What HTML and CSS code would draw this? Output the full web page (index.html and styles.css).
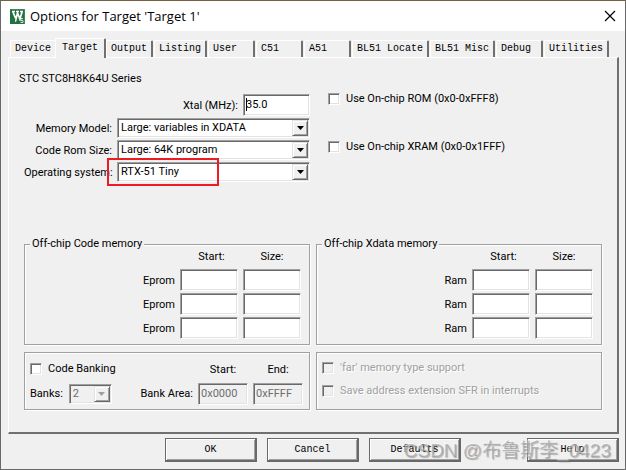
FILE: index.html
```html
<!DOCTYPE html>
<html lang="en">
<head>
<meta charset="utf-8">
<title>Options for Target 'Target 1'</title>
<link rel="stylesheet" href="styles.css">
</head>
<body>
<div class="window">
  <header class="titlebar">
    <svg class="app-icon" width="15" height="15" viewBox="0 0 15 15" aria-hidden="true">
      <rect width="15" height="15" fill="#237040"/>
      <path d="M0 0H15V15" fill="none" stroke="#5c9b72" stroke-width="1"/>
      <path d="M2 2.500H5M6 2.500H9M10 2.500H13M3 3L6 10L7.500 4L10 10L12 3" fill="none" stroke="#fff" stroke-width="1.700"/>
      <path d="M5.500 9V13M9 9L10 12M13 9.500H11V11.500H13V13.500H10.500" fill="none" stroke="#cfe5d6" stroke-width="1"/>
    </svg>
    <h1 class="title">Options for Target 'Target 1'</h1>
    <button class="close" type="button" aria-label="Close">
      <svg width="12" height="12" viewBox="0 0 12 12" aria-hidden="true"><path d="M1 1L11 11M11 1L1 11" stroke="#000" stroke-width="1.200" fill="none"/></svg>
    </button>
  </header>

  <main class="body">
    <nav class="tabs" role="tablist">
      <button class="tab" type="button" role="tab">Device</button>
      <button class="tab selected" type="button" role="tab" aria-selected="true">Target</button>
      <button class="tab" type="button" role="tab">Output</button>
      <button class="tab" type="button" role="tab">Listing</button>
      <button class="tab short" type="button" role="tab">User</button>
      <button class="tab short" type="button" role="tab">C51</button>
      <button class="tab short" type="button" role="tab">A51</button>
      <button class="tab" type="button" role="tab">BL51 Locate</button>
      <button class="tab" type="button" role="tab">BL51 Misc</button>
      <button class="tab short" type="button" role="tab">Debug</button>
      <button class="tab" type="button" role="tab">Utilities</button>
    </nav>

    <section class="pane" role="tabpanel">
      <p class="series">STC STC8H8K64U Series</p>

      <div class="columns settings">
        <div class="form">
          <label class="xtal-label" for="xtal">Xtal (MHz):</label>
          <div class="xtal"><input class="field" id="xtal" type="text" value="35.0"><span class="caret"></span></div>

          <label for="memory">Memory Model:</label>
          <div class="combo wide">
            <select id="memory"><option>Large: variables in XDATA</option></select>
            <span class="drop"><svg width="7" height="4" viewBox="0 0 7 4"><path d="M0 0H7L3.500 4Z"/></svg></span>
          </div>

          <label for="rom">Code Rom Size:</label>
          <div class="combo wide">
            <select id="rom"><option>Large: 64K program</option></select>
            <span class="drop"><svg width="7" height="4" viewBox="0 0 7 4"><path d="M0 0H7L3.500 4Z"/></svg></span>
          </div>

          <label for="os">Operating system:</label>
          <div class="combo wide">
            <select id="os"><option>RTX-51 Tiny</option></select>
            <span class="drop"><svg width="7" height="4" viewBox="0 0 7 4"><path d="M0 0H7L3.500 4Z"/></svg></span>
            <span class="highlight"></span>
          </div>
        </div>
        <div class="onchip">
          <label class="check"><input type="checkbox">Use On-chip ROM (0x0-0xFFF8)</label>
          <label class="check"><input type="checkbox">Use On-chip XRAM (0x0-0x1FFF)</label>
        </div>
      </div>

      <div class="columns">
        <fieldset class="group">
          <legend>Off-chip Code memory</legend>
          <div class="memory">
            <span></span><span class="start">Start:</span><span class="size">Size:</span>
            <label for="e1">Eprom</label><input class="field" id="e1" type="text"><input class="field" type="text" aria-label="Eprom 1 size">
            <label for="e2">Eprom</label><input class="field" id="e2" type="text"><input class="field" type="text" aria-label="Eprom 2 size">
            <label for="e3">Eprom</label><input class="field" id="e3" type="text"><input class="field" type="text" aria-label="Eprom 3 size">
          </div>
        </fieldset>
        <fieldset class="group">
          <legend>Off-chip Xdata memory</legend>
          <div class="memory">
            <span></span><span class="start">Start:</span><span class="size">Size:</span>
            <label for="r1">Ram</label><input class="field" id="r1" type="text"><input class="field" type="text" aria-label="Ram 1 size">
            <label for="r2">Ram</label><input class="field" id="r2" type="text"><input class="field" type="text" aria-label="Ram 2 size">
            <label for="r3">Ram</label><input class="field" id="r3" type="text"><input class="field" type="text" aria-label="Ram 3 size">
          </div>
        </fieldset>
      </div>

      <div class="columns lower">
        <fieldset class="group plain banking">
          <label class="check"><input type="checkbox">Code Banking</label>
          <label class="start" for="bstart">Start:</label>
          <label class="size" for="bend">End:</label>
          <div class="banks">
            <label for="banks">Banks:</label>
            <div class="combo off">
              <select id="banks" disabled><option>2</option></select>
              <span class="drop"><svg width="7" height="4" viewBox="0 0 7 4"><path d="M0 0H7L3.500 4Z"/></svg></span>
            </div>
            <span class="area">Bank Area:</span>
          </div>
          <input class="field" id="bstart" type="text" value="0x0000" disabled>
          <input class="field" id="bend" type="text" value="0xFFFF" disabled>
        </fieldset>
        <fieldset class="group plain extras">
          <label class="check off"><input type="checkbox" disabled>'far' memory type support</label>
          <label class="check off"><input type="checkbox" disabled>Save address extension SFR in interrupts</label>
        </fieldset>
      </div>
    </section>

    <footer class="actions">
      <button class="push" type="button">OK</button>
      <button class="push" type="button">Cancel</button>
      <button class="push" type="button">Defaults</button>
      <button class="push help" type="button">Help</button>
    </footer>
  </main>
  <div class="watermark">CSDN @布鲁斯李_0423</div>
</div>
</body>
</html>
```

FILE: styles.css
```css
* { box-sizing: border-box; }

body {
  margin: 0;
  font: 11px/16px Roboto, "Liberation Sans", Arial, sans-serif;
  color: #000;
  background: #f0f0f0;
}

button, input, select { font: inherit; color: inherit; margin: 0; outline: 0; }

.window {
  position: relative;
  min-height: 100vh;
  border: 1px solid #696969;
  border-top-color: #76603f;
  display: flex;
  flex-direction: column;
}

/* Title bar */
.titlebar {
  display: flex;
  align-items: center;
  height: 30px;
  padding: 0 9px;
  background: #fff;
}
.title {
  flex: 1;
  margin: 0 0 0 5px;
  font: 13px/20px "Open Sans", "Noto Sans", sans-serif;
}
.close { display: flex; padding: 0; border: 0; background: none; }

.body { flex: 1; padding: 7px 6px 7px 7px; }

/* Tabs */
.tabs {
  display: flex;
  align-items: flex-end;
  height: 19px;
  padding-left: 2px;
}
.tab {
  height: 17px;
  padding: 0 4px;
  border: 1px solid #fff;
  border-right: 2px solid #707070;
  border-bottom: 0;
  border-radius: 2px 2px 0 0;
  background: #f0f0f0;
  font: 10px/16px "Liberation Mono", monospace;
  text-align: left;
  white-space: nowrap;
  margin-right: 1px;
}
.tab:first-child { border-right: 0; margin-right: 0; }
.tab.short { min-width: 47px; }
.tab.selected {
  position: relative;
  z-index: 1;
  height: 20px;
  margin: 0 0 -1px;
  padding: 0 6px 2px;
}

/* Pane */
.pane {
  padding: 13px 15px 22px;
  border: 1px solid #fff;
  border-right: 2px solid #707070;
  border-bottom: 2px solid #707070;
}
.series { margin: 0 -5px; }
.columns {
  display: grid;
  grid-template-columns: 1fr 1fr;
  gap: 6px;
}
.settings { margin: 7px 0 55px; }
.lower { margin-top: 7px; }

.form {
  display: grid;
  grid-template-columns: 88px 1fr 67px;
  gap: 2px 5px;
  align-items: center;
  text-align: right;
  white-space: nowrap;
}
.xtal-label { grid-column: 1 / 3; }
.form label { padding-top: 2px; }
.xtal { position: relative; }
.caret {
  position: absolute;
  left: 3px;
  top: 4px;
  width: 1px;
  height: 13px;
  background: #000;
}
.wide { grid-column: 2 / 4; }

/* Sunken controls */
.field, .combo, .check input {
  border: 1px solid #a0a0a0;
  border-right-color: #fff;
  border-bottom-color: #fff;
  box-shadow: inset 1px 1px 0 #696969, inset -1px -1px 0 #e3e3e3;
  background: #fff;
}
.field {
  display: block;
  width: 100%;
  height: 22px;
  padding: 0 2px 2px;
}
.field:disabled { background: #f0f0f0; color: #6d6d6d; }

.combo {
  position: relative;
  display: grid;
  height: 20px;
  padding: 1px;
}
.combo select {
  grid-area: 1 / 1;
  appearance: none;
  width: 100%;
  height: 16px;
  padding: 0 18px 0 2px;
  border: 0;
  background: none;
  opacity: 1;
}
.drop {
  grid-area: 1 / 1;
  justify-self: end;
  display: grid;
  place-items: center;
  width: 16px;
  height: 16px;
  border: 1px solid #e3e3e3;
  border-right-color: #696969;
  border-bottom-color: #696969;
  box-shadow: inset 1px 1px 0 #fff, inset -1px -1px 0 #a0a0a0;
  background: #f0f0f0;
  pointer-events: none;
}
.combo.off { background: #f0f0f0; color: #6d6d6d; }
.combo.off path { fill: #a0a0a0; }

.highlight {
  position: absolute;
  left: -11px;
  top: -5px;
  width: 112px;
  height: 28px;
  border: 2px solid #ed1c24;
  pointer-events: none;
}

.check { display: flex; align-items: center; gap: 6px; white-space: nowrap; }
.check input { appearance: none; width: 12px; height: 12px; flex: none; }
.check.off { color: #a0a0a0; text-shadow: 1px 1px 0 #fff; }
.check.off input { background: #f0f0f0; }

.onchip {
  display: flex;
  flex-direction: column;
  gap: 32px;
  padding: 0 0 0 12px;
  margin-top: -3px;
}

/* Group boxes */
.group {
  min-width: 0;
  margin: 0;
  padding: 0 8px 5px 5px;
  border: 1px solid #a0a0a0;
  box-shadow: 1px 1px 0 #fff, inset 1px 1px 0 #fff;
}
.group legend { padding: 0 2px; line-height: 14px; background: #f0f0f0; }
.memory {
  display: grid;
  grid-template-columns: 1fr 58px 58px;
  gap: 2px 5px;
  align-items: center;
  text-align: right;
}
.memory label { padding-top: 2px; }
.start, .size { padding-bottom: 4px; text-align: center; line-height: 12px; }
.start { padding-left: 5px; }
.plain { height: 58px; }

.banking {
  display: grid;
  grid-template-columns: 1fr 50px 50px;
  grid-template-rows: 24px 22px;
  gap: 2px 5px;
  align-items: center;
  padding: 4px 6px 4px 5px;
}
.banking .start, .banking .size { padding: 2px 0 0; }
.banks { display: flex; align-items: center; gap: 6px; }
.banks .combo { width: 43px; }
.area { margin-left: auto; }

.extras {
  display: flex;
  flex-direction: column;
  gap: 7px;
  padding: 7px 5px;
}

/* Action buttons */
.actions { display: flex; gap: 10px; margin-top: 4px; padding-left: 157px; }
.push {
  width: 92px;
  height: 24px;
  padding: 0;
  border: 1px solid #696969;
  border-right-width: 2px;
  border-bottom-width: 2px;
  box-shadow: inset 1px 1px 0 #fff, inset -1px -1px 0 #a0a0a0;
  background: #f0f0f0;
  font: 10px/16px "Liberation Mono", monospace;
}
.push.help { margin-left: auto; }

.watermark {
  position: absolute;
  right: 14px;
  bottom: 5px;
  font: 19px/26px "Liberation Sans", "Noto Sans CJK SC", sans-serif;
  color: rgba(150, 150, 150, 0.6);
  text-shadow: -1px -1px 0 rgba(255, 255, 255, 0.5), 1px 1px 1px rgba(110, 110, 110, 0.5);
  white-space: nowrap;
  pointer-events: none;
}
```
